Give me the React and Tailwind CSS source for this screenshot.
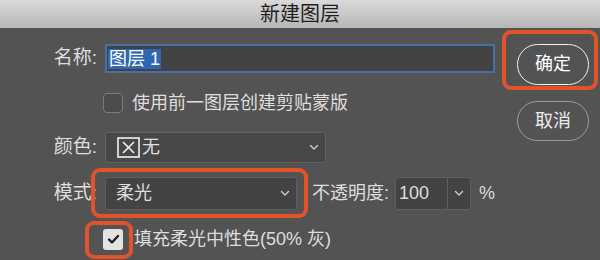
import React from 'react';

function Chevron({ className = '' }) {
  return (
    <svg className={className} width="10" height="7" viewBox="0 0 10 7" fill="none" stroke="#cfcfcf" strokeWidth="1.4" strokeLinecap="round" strokeLinejoin="round">
      <polyline points="1.5,1.5 5,5 8.5,1.5" />
    </svg>
  );
}

function RedMark({ className }) {
  return <div className={`absolute border-[4px] border-[#e2532b] rounded-[9px] pointer-events-none ${className}`} />;
}

export default function App() {
  return (
    <div className="w-[600px] h-[260px] bg-[#535353] overflow-hidden whitespace-nowrap font-['Liberation_Sans','Noto_Sans_CJK_SC',sans-serif] text-[#dedede]">
      {/* Title bar */}
      <div className="h-[28px] bg-gradient-to-b from-[#dadada] to-[#b6b6b6] flex items-center justify-center text-[20px] leading-none text-[#1f1f1f]">
        新建图层
      </div>

      <div className="flex">
        {/* Form */}
        <div className="w-[495px] shrink-0 flex flex-col">
          {/* 名称 */}
          <div className="mt-[16px] h-[29px] flex items-center">
            <span className="w-[97px] shrink-0 text-right text-[19px]">名称:</span>
            <div className="ml-[8px] flex-1 h-full bg-[#434343] border-2 border-[#4a6ea6] flex items-center px-[1px]">
              <span className="bg-[#2f68b0] text-white text-[18px] leading-[20px] px-[1px]">图层 1</span>
            </div>
          </div>

          {/* 剪贴蒙版 */}
          <div className="mt-[20px] h-[20px] flex items-center pl-[103px]">
            <div className="w-[20px] h-[20px] shrink-0 rounded-[4px] border border-[#7a7a7a] bg-[#4b4b4b]" />
            <span className="ml-[9px] text-[18px]">使用前一图层创建剪贴蒙版</span>
          </div>

          {/* 颜色 */}
          <div className="mt-[19px] h-[31px] flex items-center">
            <span className="w-[97px] shrink-0 text-right text-[19px]">颜色:</span>
            <div className="ml-[8px] w-[221px] h-full bg-[#474747] border border-[#626262] rounded-[3px] flex items-center pl-[11px] pr-[6px]">
              <svg width="23" height="21" viewBox="0 0 23 21" fill="none" stroke="#f2f2f2" strokeWidth="1.6">
                <rect x="1" y="1" width="21" height="19" />
                <line x1="6" y1="5" x2="17" y2="16" />
                <line x1="17" y1="5" x2="6" y2="16" />
              </svg>
              <span className="ml-[2px] text-[18px]">无</span>
              <Chevron className="ml-auto" />
            </div>
          </div>

          {/* 模式 */}
          <div className="mt-[14px] h-[33px] flex items-center">
            <span className="w-[97px] shrink-0 text-right text-[19px]">模式:</span>
            <div className="relative ml-[8px] w-[192px] shrink-0 h-full">
              <div className="h-full bg-[#434343] border border-[#5e5e5e] rounded-[3px] flex items-center pl-[10px] pr-[6px]">
                <span className="text-[18px]">柔光</span>
                <Chevron className="ml-auto" />
              </div>
              <RedMark className="-left-[14px] -right-[11px] -top-[9px] -bottom-[8px]" />
            </div>
            <span className="ml-[15px] shrink-0 text-[18px]">不透明度:</span>
            <div className="ml-[6px] h-full shrink-0 flex border border-[#5e5e5e] rounded-[3px] bg-[#434343]">
              <div className="w-[51px] flex items-center pl-[3px] text-[18px]">100</div>
              <div className="w-[23px] border-l border-[#5e5e5e] flex items-center justify-center">
                <Chevron />
              </div>
            </div>
            <span className="ml-[8px] shrink-0 text-[18px]">%</span>
          </div>

          {/* 填充中性色 */}
          <div className="mt-[18px] h-[22px] flex items-center pl-[103px]">
            <div className="relative w-[20px] h-[21px] shrink-0">
              <div className="w-full h-full rounded-[3px] bg-[#e3e3e3] flex items-center justify-center">
                <svg width="13" height="11" viewBox="0 0 13 11" fill="none" stroke="#1e1e1e" strokeWidth="2.4" strokeLinecap="round" strokeLinejoin="round">
                  <polyline points="2,5.5 5,8.5 11,2" />
                </svg>
              </div>
              <RedMark className="-left-[18px] -right-[10px] -top-[8px] -bottom-[9px]" />
            </div>
            <span className="ml-[11px] text-[18px]">填充柔光中性色(50% 灰)</span>
          </div>
        </div>

        {/* Buttons */}
        <div className="ml-[22px] flex flex-col">
          <div className="relative mt-[16px]">
            <div className="w-[72px] h-[41px] rounded-full border-[1.5px] border-[#f2f2f2] flex items-center justify-center text-[18px] text-white">
              确定
            </div>
            <RedMark className="-left-[15px] -right-[9px] -top-[14px] -bottom-[5px]" />
          </div>
          <div className="mt-[16px] w-[72px] h-[40px] rounded-full border-[1.5px] border-[#9a9a9a] flex items-center justify-center text-[18px] text-[#ececec]">
            取消
          </div>
        </div>
      </div>
    </div>
  );
}
